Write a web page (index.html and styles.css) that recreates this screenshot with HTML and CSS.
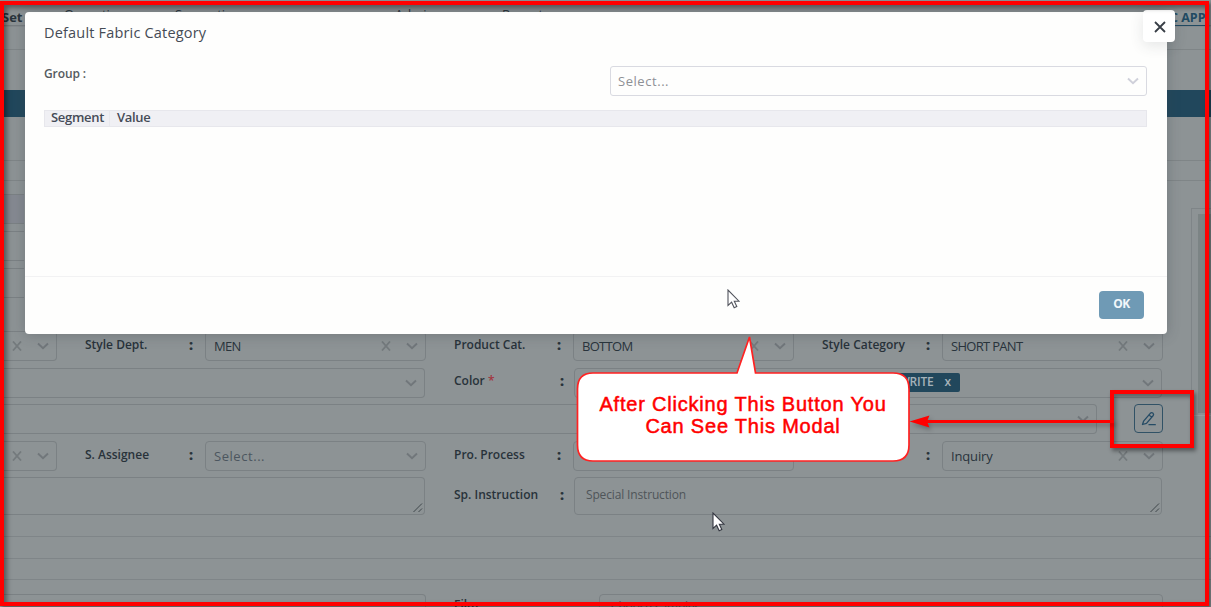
FILE: index.html
```html
<!DOCTYPE html>
<html lang="en">
<head>
<meta charset="utf-8">
<title>Default Fabric Category</title>
<link rel="stylesheet" href="styles.css">
</head>
<body>
<svg class="defs" width="0" height="0">
  <symbol id="chev" viewBox="0 0 12 8"><path d="M1 1.500 6 6.300 11 1.500" fill="none" stroke="currentColor" stroke-width="1.900"/></symbol>
  <symbol id="clear" viewBox="0 0 10 10"><path d="M1 .5 9 9.500M9 .5 1 9.500" fill="none" stroke="currentColor" stroke-width="1.800"/></symbol>
  <symbol id="grip" viewBox="0 0 10 10"><path d="M.5 9 9 .5M5.500 9 9 5.500" fill="none" stroke="#3f464a" stroke-width="1"/></symbol>
  <symbol id="cursor" viewBox="0 0 13 20"><path d="M1 1V16.500L4.600 13.200 7.200 18.800 9.800 17.600 7.300 12.200H12Z" fill="#fff" stroke="#333640" stroke-width="1.100"/></symbol>
</svg>
<div class="screen">
  <main class="page">
    <header class="topbar"><span class="top-set">Set</span><span class="top-item i1">Operation</span><span class="top-item i2">Separation</span><span class="top-item i3">Admin</span><span class="top-item i4">Report</span><span class="top-link">C APP</span></header>
    <div class="strip"></div>
    <div class="band"></div>
    <div class="gap-a"></div>
    <div class="gap-b"></div>
    <div class="upper">
      <div class="stack"><i class="tint"></i><i></i><i></i></div>
      <div class="panel"><div class="panel-in"></div></div>
    </div>
    <section class="form">
      <div class="row four">
        <div class="field cut"><svg class="x"><use href="#clear"/></svg><svg class="v"><use href="#chev"/></svg></div>
        <label class="lab"><span>Style Dept.</span><b>:</b></label>
        <div class="field"><span class="val caps">MEN</span><svg class="x"><use href="#clear"/></svg><svg class="v"><use href="#chev"/></svg></div>
        <label class="lab"><span>Product Cat.</span><b>:</b></label>
        <div class="field"><span class="val caps">BOTTOM</span><svg class="x"><use href="#clear"/></svg><svg class="v"><use href="#chev"/></svg></div>
        <label class="lab"><span>Style Category</span><b>:</b></label>
        <div class="field"><span class="val caps">SHORT PANT</span><svg class="x"><use href="#clear"/></svg><svg class="v"><use href="#chev"/></svg></div>
      </div>
      <div class="row two">
        <div class="field cut"><svg class="v"><use href="#chev"/></svg></div>
        <label class="lab"><span>Color <em>*</em></span><b>:</b></label>
        <div class="field"><span class="tag"><span>WRITE</span><span>x</span></span><svg class="v"><use href="#chev"/></svg></div>
      </div>
      <div class="row one">
        <div class="field cut"><svg class="v"><use href="#chev"/></svg></div>
        <button class="edit"><svg width="16" height="16" viewBox="0 0 16 16" fill="none" stroke="currentColor" stroke-width="1.300" stroke-linejoin="round" stroke-linecap="round"><path d="M1.500 13.500 2.600 10.200 9.300 2.300Q10.500 1.100 11.800 2 13.200 3.200 12.200 4.500L5.500 12.300ZM8.200 3.700Q9 5.300 10.900 5.900M8 13.700H14.300"/></svg></button>
      </div>
      <div class="row four">
        <div class="field cut"><svg class="x"><use href="#clear"/></svg><svg class="v"><use href="#chev"/></svg></div>
        <label class="lab"><span>S. Assignee</span><b>:</b></label>
        <div class="field"><span class="val hint">Select...</span><svg class="v"><use href="#chev"/></svg></div>
        <label class="lab"><span>Pro. Process</span><b>:</b></label>
        <div class="field"></div>
        <label class="lab"><span></span><b>:</b></label>
        <div class="field"><span class="val">Inquiry</span><svg class="x"><use href="#clear"/></svg><svg class="v"><use href="#chev"/></svg></div>
      </div>
      <div class="row two tall">
        <div class="field cut"><svg class="g"><use href="#grip"/></svg></div>
        <label class="lab"><span>Sp. Instruction</span><b>:</b></label>
        <div class="field"><span class="special">Special Instruction</span><svg class="g"><use href="#grip"/></svg></div>
      </div>
    </section>
    <div class="rule r1"></div><div class="rule r2"></div><div class="rule r3"></div>
    <div class="last"><div class="field cut"></div><label class="lab"><span>Film</span></label><div class="field"><span class="special">Choose samples</span></div></div>
  </main>

  <div class="modal">
    <h1 class="title">Default Fabric Category</h1>
    <div class="group"><span class="group-label">Group :</span><div class="select"><span>Select...</span><svg class="v"><use href="#chev"/></svg></div></div>
    <div class="thead"><span class="seg">Segment</span><span class="value">Value</span></div>
    <div class="foot"><button class="ok">OK</button></div>
    <button class="close"><svg width="12" height="12" viewBox="0 0 12 12"><path d="M1 1 11 11M11 1 1 11" stroke="#383e46" stroke-width="1.800"/></svg></button>
  </div>

  <svg class="cursor c1"><use href="#cursor"/></svg>
  <svg class="cursor c2"><use href="#cursor"/></svg>
  <div class="mark"></div>
  <svg class="callout" width="1211" height="607">
    <path d="M593 373H737L749.500 337 755.500 373H893Q909 373 909 389V445Q909 461 893 461H593Q577.500 461 577.500 445V389Q577.500 373 593 373Z" fill="#fff" stroke="#f22" stroke-width="1.700"/>
    <g class="arrow"><path d="M925 421.500H1114" stroke="red" stroke-width="3"/><path d="M909.500 421.500 929.500 415.500 927 421.500 929.500 427.500Z" fill="red"/></g>
  </svg>
  <p class="note"><span>After Clicking This Button You</span><span>Can See This Modal</span></p>
  <div class="frame"></div>
</div>
</body>
</html>
```
FILE: styles.css
```css
* { box-sizing: border-box; }
body { margin: 0; background: #8d9395; font-family: "Open Sans", "Noto Sans", sans-serif; }
.defs { position: absolute; }
.screen { position: relative; width: 1211px; height: 607px; overflow: hidden; }
.page { height: 607px; overflow: hidden; color: #29343c; background: #8d9395; }
.topbar { position: relative; height: 26px; border-bottom: 1px solid #777d80; font-size: 13px; line-height: 16px; }
.top-set { position: absolute; left: 2px; top: 9px; font-weight: 700; }
.top-item { position: absolute; top: 6px; }
.i1 { left: 64px; } .i2 { left: 175px; } .i3 { left: 395px; } .i4 { left: 502px; }
.top-link { position: absolute; left: 1170px; top: 10px; font-size: 12.500px; line-height: 15px; font-weight: 700; color: #214a62; border-bottom: 1px solid #214a62; white-space: nowrap; }
.strip { height: 64px; border-top: 1px solid #858a8d; padding-top: 22px; }
.strip::after { content: ""; display: block; border-top: 1px solid #7f8587; }
.band { height: 27px; background: #21475c; }
.gap-a { height: 44px; border-bottom: 1px solid #7f8587; }
.gap-b { height: 20px; border-bottom: 1px solid #7f8587; }
.upper { display: flex; justify-content: space-between; height: 150px; }
.stack { width: 24px; padding-top: 13px; display: flex; flex-direction: column; gap: 7px; }
.stack i { height: 30px; border: solid #7b8184; border-width: 1px 0; }
.stack .tint { background: #858991; }
.panel { width: 20px; margin-top: 27px; padding: 5px 0 0 6px; height: 208px; border: solid #7f8588; border-width: 1px 0 0 1px; border-bottom: 1px solid #9aa0a2; }
.panel-in { height: 199px; background: #7c8485; }
.form { display: flex; flex-direction: column; gap: 6px; height: 185px; }
.row { display: grid; height: 30.500px; flex: none; }
.four { grid-template-columns: 57px 148px 221px 147px 221px 148px 221px; }
.two { grid-template-columns: 425px 149px 588px; }
.one { grid-template-columns: 1097px 29px; column-gap: 37px; }
.tall { height: 38px; }
.field { display: flex; align-items: center; border: 1px solid #7b8184; border-radius: 4px; height: 30px; padding: 0 8px; position: relative; }
.tall .field { height: 38px; }
.cut { border-left: 0; border-radius: 0 4px 4px 0; }
.val { font-size: 13px; white-space: nowrap; letter-spacing: -.15px; }
.caps { letter-spacing: -.7px; }
.hint { color: #4c565f; letter-spacing: .55px; }
.x { width: 10px; height: 10px; margin-left: auto; color: #747a7d; }
.v { width: 12px; height: 8px; margin-left: auto; color: #71777b; }
.x + .v { margin-left: 15px; }
.row .field { padding-right: 7px; }
.g { position: absolute; right: 1px; bottom: 1px; width: 10px; height: 10px; }
.lab { display: flex; justify-content: space-between; padding: 5px 12px 0 28px; font-size: 12px; font-weight: 600; line-height: 17px; color: #28323a; white-space: nowrap; }
.lab b { font-size: 14px; }
.lab em { color: #a33540; font-style: normal; }
.two .lab { padding: 4px 10px 0 29px; }
.two.tall .lab { padding-top: 9px; }
.tag { display: flex; justify-content: flex-end; gap: 11px; width: 106px; height: 19px; margin-left: 271px; padding: 0 9px; font-size: 12px; line-height: 17px; font-weight: 600; letter-spacing: -.2px; color: #a5b2b9; background: #21475c; border-radius: 2px; white-space: nowrap; }
.edit { width: 29px; height: 29px; padding: 0; display: grid; place-items: center; color: #254b65; background: none; border: 1px solid #315266; border-radius: 4px; }
.special { font-size: 12px; color: #4f5559; padding-left: 3px; letter-spacing: -.15px; white-space: nowrap; }
.tall .special { padding-bottom: 3px; }
.rule { border-bottom: 1px solid #7f8588; }
.r1 { height: 21px; } .r2 { height: 22px; } .r3 { height: 21px; }
.last { display: grid; grid-template-columns: 426px 173px 564px; padding-top: 14px; }
.last .lab { padding-top: 2px; }
.last .special { padding-bottom: 5px; }

.modal { position: absolute; left: 25px; top: 12px; width: 1142px; height: 322px; padding: 11px 20px 0 19px; background: #fefefd; border-radius: 4px; box-shadow: 0 1px 13px rgba(60, 65, 75, .32); display: flex; flex-direction: column; }
.title { margin: 0; font-size: 14.500px; line-height: 20px; font-weight: 400; letter-spacing: .18px; color: #454b55; }
.group { display: flex; justify-content: space-between; margin-top: 23px; }
.group-label { font-size: 12px; line-height: 16px; font-weight: 600; letter-spacing: -.1px; color: #555a60; }
.select { display: flex; align-items: center; width: 537px; height: 30px; padding: 0 7px; border: 1px solid #d9dae1; border-radius: 3px; font-size: 13px; letter-spacing: .55px; color: #8e9095; }
.select .v { color: #cfd0da; }
.thead { display: flex; margin-top: 14px; height: 17px; background: #f0f0f4; border: 1px solid #e7e7ec; font-size: 13px; line-height: 13px; font-weight: 600; letter-spacing: -.3px; color: #454b57; }
.seg { width: 65px; padding-left: 6px; border-right: 1px solid #e8e8ed; }
.value { padding-left: 7px; }
.foot { display: flex; justify-content: flex-end; margin: auto -20px 0 -19px; height: 58px; padding: 14px 23px 0; border-top: 1px solid #f2f2f3; }
.ok { width: 45px; height: 28px; padding: 0 0 3px; border: 0; border-radius: 4px; background: #6f9ab5; color: #f2f7fa; font: 700 12px "Open Sans", sans-serif; letter-spacing: -.4px; }
.close { position: absolute; right: -8px; top: -2px; width: 32px; height: 32px; padding: 2px 0 0 1px; display: grid; place-items: center; border: 0; border-radius: 4px; background: #fff; box-shadow: 0 4px 14px rgba(50, 55, 65, .12); }
.cursor { position: absolute; width: 13px; height: 20px; }
.c1 { left: 727px; top: 289px; opacity: .85; }
.c2 { left: 712px; top: 512px; }
.mark { position: absolute; left: 1110px; top: 390px; width: 84px; height: 58px; border: 4px solid red; box-shadow: 2px 3px 4px rgba(0, 0, 0, .4), inset 2px 3px 4px rgba(0, 0, 0, .35); }
.callout { position: absolute; left: 0; top: 0; }
.arrow { filter: drop-shadow(2px 3px 2px rgba(0, 0, 0, .25)); }
.note { position: absolute; left: 577px; top: 392.500px; width: 332px; margin: 0; text-align: center; font: 20px/22.500px "Liberation Sans", sans-serif; color: red; -webkit-text-stroke: .5px red; white-space: nowrap; }
.note span { display: block; letter-spacing: .8px; }
.frame { position: absolute; left: 0; top: 1px; width: 1209px; height: 605px; border: 4px solid red; box-shadow: 2px 2px 3px rgba(0, 0, 0, .4), inset 3px 3px 5px rgba(0, 0, 0, .4); }
```
